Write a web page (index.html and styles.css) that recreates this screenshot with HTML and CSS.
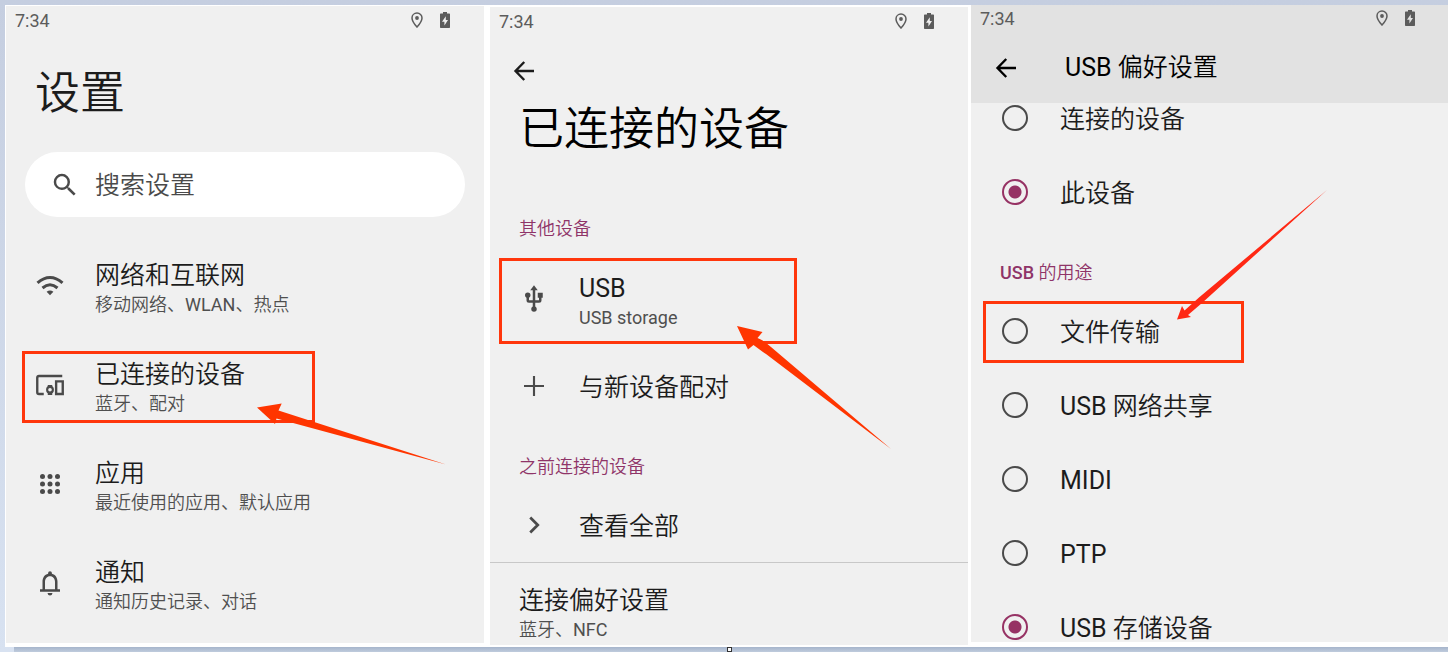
FILE: index.html
```html
<!DOCTYPE html>
<html lang="zh-CN">
<head>
<meta charset="utf-8">
<meta name="viewport" content="width=device-width, initial-scale=1">
<title>设置</title>
<link rel="stylesheet" href="styles.css">
</head>
<body>
<svg class="sprite" aria-hidden="true">
  <symbol id="pin" viewBox="0 0 12 16">
    <path d="M6 1C3.200 1 1 3.200 1 5.900C1 9.400 6 15 6 15S11 9.400 11 5.900C11 3.200 8.800 1 6 1Z" fill="none" stroke="currentColor" stroke-width="1.500"/>
    <circle cx="6" cy="6" r="1.900" fill="currentColor"/>
  </symbol>
  <symbol id="battery" viewBox="0 0 10 16">
    <path fill="currentColor" fill-rule="evenodd" d="M3 0H7V1.500H9.300Q10 1.500 10 2.200V15.300Q10 16 9.300 16H.7Q0 16 0 15.300V2.200Q0 1.500 .7 1.500H3ZM5.800 4.300L2 9.800H4.400V13.500L8 8H5.800Z"/>
  </symbol>
  <symbol id="back" viewBox="0 0 24 24">
    <path d="M20 12H5.500M12.200 4.800L5.200 12L12.200 19.200" fill="none" stroke="currentColor" stroke-width="1.900"/>
  </symbol>
</svg>

<main class="sheet">
  <section class="panel panel-home">
    <div class="status"><span>7:34</span><svg class="pin"><use href="#pin"/></svg><svg class="battery"><use href="#battery"/></svg></div>
    <h1 class="title title-home">设置</h1>
    <label class="search">
      <svg class="icon" viewBox="0 0 24 24"><path fill="currentColor" d="M15.500 14h-.79l-.28-.27A6.470 6.470 0 0 0 16 9.500 6.500 6.500 0 1 0 9.500 16c1.610 0 3.090-.59 4.230-1.570l.27.28v.79l5 4.990L20.490 19l-4.990-5zm-6 0C7.010 14 5 11.990 5 9.500S7.010 5 9.500 5 14 7.010 14 9.500 11.990 14 9.500 14z"/></svg>
      <input type="search" placeholder="搜索设置" aria-label="搜索设置">
    </label>
    <nav class="list">
      <a class="row" href="#network">
        <svg class="icon" viewBox="0 0 24 24"><path d="M2 9.500Q12 .8 22 9.500M6 13.600Q12 8.400 18 13.600" fill="none" stroke="currentColor" stroke-width="2.400"/><path fill="currentColor" d="M9.300 16.600Q12 14.400 14.700 16.600L12 19.300Z"/></svg>
        <span class="text"><span class="name">网络和互联网</span><span class="summary">移动网络、<span class="latin">WLAN</span>、热点</span></span>
      </a>
      <a class="row" href="#devices">
        <svg class="icon" viewBox="0 0 24 24"><path d="M21.800 4.800H3.200Q1.800 4.800 1.800 6.200V17.800Q1.800 19.200 3.200 19.200H7M16.900 9.100H22.200V19.200H16.900Z" fill="none" stroke="currentColor" stroke-width="1.900"/><circle cx="12" cy="15.800" r="2.300" fill="none" stroke="currentColor" stroke-width="1.700"/><path fill="currentColor" d="M10.200 12h3.600v2h-3.600zM10.200 18h3.600v2h-3.600z"/></svg>
        <span class="text"><span class="name">已连接的设备</span><span class="summary">蓝牙、配对</span></span>
        <span class="mark mark-devices"></span>
      </a>
      <a class="row" href="#apps">
        <svg class="icon" viewBox="0 0 24 24" fill="currentColor"><circle cx="6" cy="6" r="2"/><circle cx="12" cy="6" r="2"/><circle cx="18" cy="6" r="2"/><circle cx="6" cy="12" r="2"/><circle cx="12" cy="12" r="2"/><circle cx="18" cy="12" r="2"/><circle cx="6" cy="18" r="2"/><circle cx="12" cy="18" r="2"/><circle cx="18" cy="18" r="2"/></svg>
        <span class="text"><span class="name">应用</span><span class="summary">最近使用的应用、默认应用</span></span>
      </a>
      <a class="row row-last" href="#notifications">
        <svg class="icon" viewBox="0 0 24 24"><path fill="currentColor" d="M18 17v-6c0-3.070-1.640-5.640-4.500-6.320V4a1.500 1.500 0 0 0-3 0v.68C7.630 5.360 6 7.920 6 11v6H4v2h16v-2zm-2 0H8v-6c0-2.480 1.510-4.500 4-4.500s4 2.020 4 4.500zM10 20h4q-.3 2-2 2t-2-2z"/></svg>
        <span class="text"><span class="name">通知</span><span class="summary">通知历史记录、对话</span></span>
      </a>
    </nav>
    <svg class="arrow arrow-devices" viewBox="0 0 190 61" aria-hidden="true"><path d="M1 4.500L25.700 .5L22.500 7.500L190 61.500L20.500 15.500L19 21Z"/></svg>
  </section>

  <section class="panel panel-devices">
    <div class="status"><span>7:34</span><svg class="pin"><use href="#pin"/></svg><svg class="battery"><use href="#battery"/></svg></div>
    <button class="back" aria-label="返回"><svg class="icon"><use href="#back"/></svg></button>
    <h1 class="title title-devices">已连接的设备</h1>
    <h2 class="category">其他设备</h2>
    <a class="row" href="#usb">
      <svg class="icon" viewBox="0 0 24 24"><path fill="currentColor" d="M15 7v4h1v2h-3V5h2l-3-4-3 4h2v8H8v-2.070c.7-.37 1.200-1.080 1.200-1.930a2.200 2.200 0 1 0-4.400 0c0 .85.500 1.560 1.200 1.930V13a2 2 0 0 0 2 2h3v3.050c-.71.370-1.200 1.100-1.200 1.950a2.200 2.200 0 0 0 4.400 0c0-.85-.49-1.580-1.200-1.950V15h3a2 2 0 0 0 2-2v-2h1V7z"/></svg>
      <span class="text"><span class="name latin">USB</span><span class="summary latin">USB storage</span></span>
      <span class="mark mark-usb"></span>
    </a>
    <a class="row row-single" href="#pair">
      <svg class="icon" viewBox="0 0 24 24"><path d="M12 4V20M4 12H20" stroke="currentColor" stroke-width="1.700"/></svg>
      <span class="name">与新设备配对</span>
    </a>
    <h2 class="category">之前连接的设备</h2>
    <a class="row row-single" href="#all">
      <svg class="icon" viewBox="0 0 24 24"><path d="M9 6L15 12L9 18" fill="none" stroke="currentColor" stroke-width="2.200"/></svg>
      <span class="name">查看全部</span>
    </a>
    <a class="row row-last divided" href="#preferences">
      <span class="text"><span class="name">连接偏好设置</span><span class="summary">蓝牙、<span class="latin">NFC</span></span></span>
    </a>
    <svg class="arrow arrow-usb" viewBox="0 0 154 123" aria-hidden="true"><path d="M0 0L25.500 6L20.500 12Q28 15 34 21L154 123L29 28Q23 24 16.500 19L11 23.500Z"/></svg>
  </section>

  <section class="panel panel-usb">
    <header class="appbar">
      <div class="status"><span>7:34</span><svg class="pin"><use href="#pin"/></svg><svg class="battery"><use href="#battery"/></svg></div>
      <div class="toolbar">
        <button class="back" aria-label="返回"><svg class="icon"><use href="#back"/></svg></button>
        <h1 class="name"><span class="latin">USB</span> 偏好设置</h1>
      </div>
    </header>
    <label class="option option-cut"><input type="radio" name="host"><span class="name">连接的设备</span></label>
    <label class="option"><input type="radio" name="host" checked><span class="name">此设备</span></label>
    <h2 class="category"><span class="latin-strong">USB</span> 的用途</h2>
    <label class="option"><input type="radio" name="use"><span class="name">文件传输</span><span class="mark mark-transfer"></span></label>
    <label class="option"><input type="radio" name="use"><span class="name"><span class="latin">USB</span> 网络共享</span></label>
    <label class="option"><input type="radio" name="use"><span class="name latin">MIDI</span></label>
    <label class="option"><input type="radio" name="use"><span class="name latin">PTP</span></label>
    <label class="option option-last"><input type="radio" name="use" checked><span class="name"><span class="latin">USB</span> 存储设备</span></label>
    <svg class="arrow arrow-transfer" viewBox="0 0 150 130" aria-hidden="true"><path d="M0 129.500L5 116L7.500 120.500L22 107.500L150 0L25 113L11 125L14 127Z"/></svg>
  </section>
  <span class="handle"></span>
</main>
<div class="shadow"></div>
</body>
</html>
```
FILE: styles.css
```css
* { box-sizing: border-box; }

body {
  display: flex;
  flex-direction: column;
  min-height: 100vh;
  margin: 0;
  padding: 5px 0 0 5px;
  background: linear-gradient(#c5cee0, #d8e2f1);
  color: #1c1c1c;
  font-family: Roboto, "Noto Sans CJK SC", sans-serif;
  font-weight: 350;
}

h1, h2 { margin: 0; font-weight: inherit; }
a { color: inherit; text-decoration: none; }
svg { display: block; flex: none; }
button { padding: 0; border: 0; background: none; color: inherit; cursor: pointer; }

.sprite { position: absolute; width: 0; height: 0; }
.latin { font-weight: 400; }
.latin-strong { font-weight: 500; }

.sheet {
  position: relative;
  flex: 1;
  display: grid;
  grid-template-columns: 484fr 481fr 477fr;
  padding-left: 1px;
  background: #fff;
}

.panel { position: relative; min-width: 0; background: #f0f0f0; }
.panel-home { margin: 1px 6px 4px 0; }
.panel-devices { margin: 2px 3px 2px 0; }
.panel-usb { margin: 0 0 5px; }

.status {
  display: flex;
  align-items: center;
  height: 30px;
  padding: 0 34px 2px 9px;
  color: #5c5c5c;
  font-size: 18px;
  font-weight: 400;
}
.status span { flex: 1; }
.pin { width: 12px; height: 16px; margin-right: 17px; }
.battery { width: 10px; height: 16px; }

.title { font-size: 45px; line-height: 60px; padding: 0 29px; }
.title-home { margin-top: 28px; }
.title-devices { margin: 14px 0 25px; color: #000; }

.icon { width: 30px; height: 30px; }

.search {
  display: flex;
  align-items: center;
  gap: 15px;
  height: 65px;
  margin: 28px 19px 20px;
  padding: 0 25px;
  border-radius: 33px;
  background: #fff;
  color: #4a4a4a;
}
.search input {
  flex: 1;
  min-width: 0;
  padding: 2px 0 0;
  border: 0;
  outline: 0;
  background: none;
  color: inherit;
  font: inherit;
  font-size: 25px;
}
.search input::placeholder { color: #4a4a4a; }

.row {
  position: relative;
  display: flex;
  align-items: center;
  gap: 30px;
  height: 99px;
  padding: 0 29px 2px;
}
.row .icon { color: #4a4a4a; }
.row-single { height: 74px; padding-bottom: 0; }
.row-single .name { padding-top: 3px; }
.row-last { height: auto; padding-top: 16px; }
.text { padding-top: 7px; }
.name { font-size: 25px; line-height: 32px; }
.text .name, .text .summary { display: block; }
.summary { color: #4f4f4f; font-size: 18px; line-height: 26px; }
.divided { padding-top: 15px; border-top: 1px solid #c8c8c8; }

.category {
  padding: 31px 29px 8px;
  color: #8f3468;
  font-size: 18px;
  line-height: 26px;
}

.panel-devices > .back { display: block; margin: 19px 0 0 19px; }

.appbar { background: #e2e2e2; color: #000; }
.appbar .status { height: 28px; padding-right: 33px; }
.toolbar {
  display: flex;
  align-items: center;
  gap: 44px;
  height: 70px;
  padding: 0 20px;
}

.option {
  position: relative;
  display: flex;
  align-items: center;
  gap: 32px;
  height: 74px;
  padding: 0 31px;
}
.option .name { padding-top: 4px; }
.option input {
  appearance: none;
  flex: none;
  width: 26px;
  height: 26px;
  margin: 0;
  border: 2px solid #4a4a4a;
  border-radius: 50%;
}
.option input:checked {
  border-color: #963264;
  background: radial-gradient(circle, #963264 6px, transparent 7px);
}
.option-cut { height: 52px; padding-bottom: 22px; }
.option-last { height: 50px; padding-top: 24px; }

.mark { position: absolute; border: 3px solid #ff360c; pointer-events: none; }
.mark-devices { left: 16px; top: 15px; width: 293px; height: 72px; }
.mark-usb { left: 9px; top: 8px; width: 298px; height: 86px; }
.mark-transfer { left: 12px; top: 7px; width: 261px; height: 62px; }

.arrow { position: absolute; fill: #ff3500; pointer-events: none; overflow: visible; }
.arrow-devices { left: 250px; top: 397px; width: 190px; height: 61px; }
.arrow-usb { left: 247px; top: 319px; width: 154px; height: 123px; }
.arrow-transfer { left: 206px; top: 185px; width: 150px; height: 130px; fill: #ff2814; }

.handle {
  position: absolute;
  left: 50%;
  bottom: -5px;
  width: 5px;
  height: 5px;
  border: 1px solid #333;
  background: #fff;
}
.shadow { height: 5px; margin-left: 9px; background: linear-gradient(#a6b5cb, #bfcbdd); }
```
